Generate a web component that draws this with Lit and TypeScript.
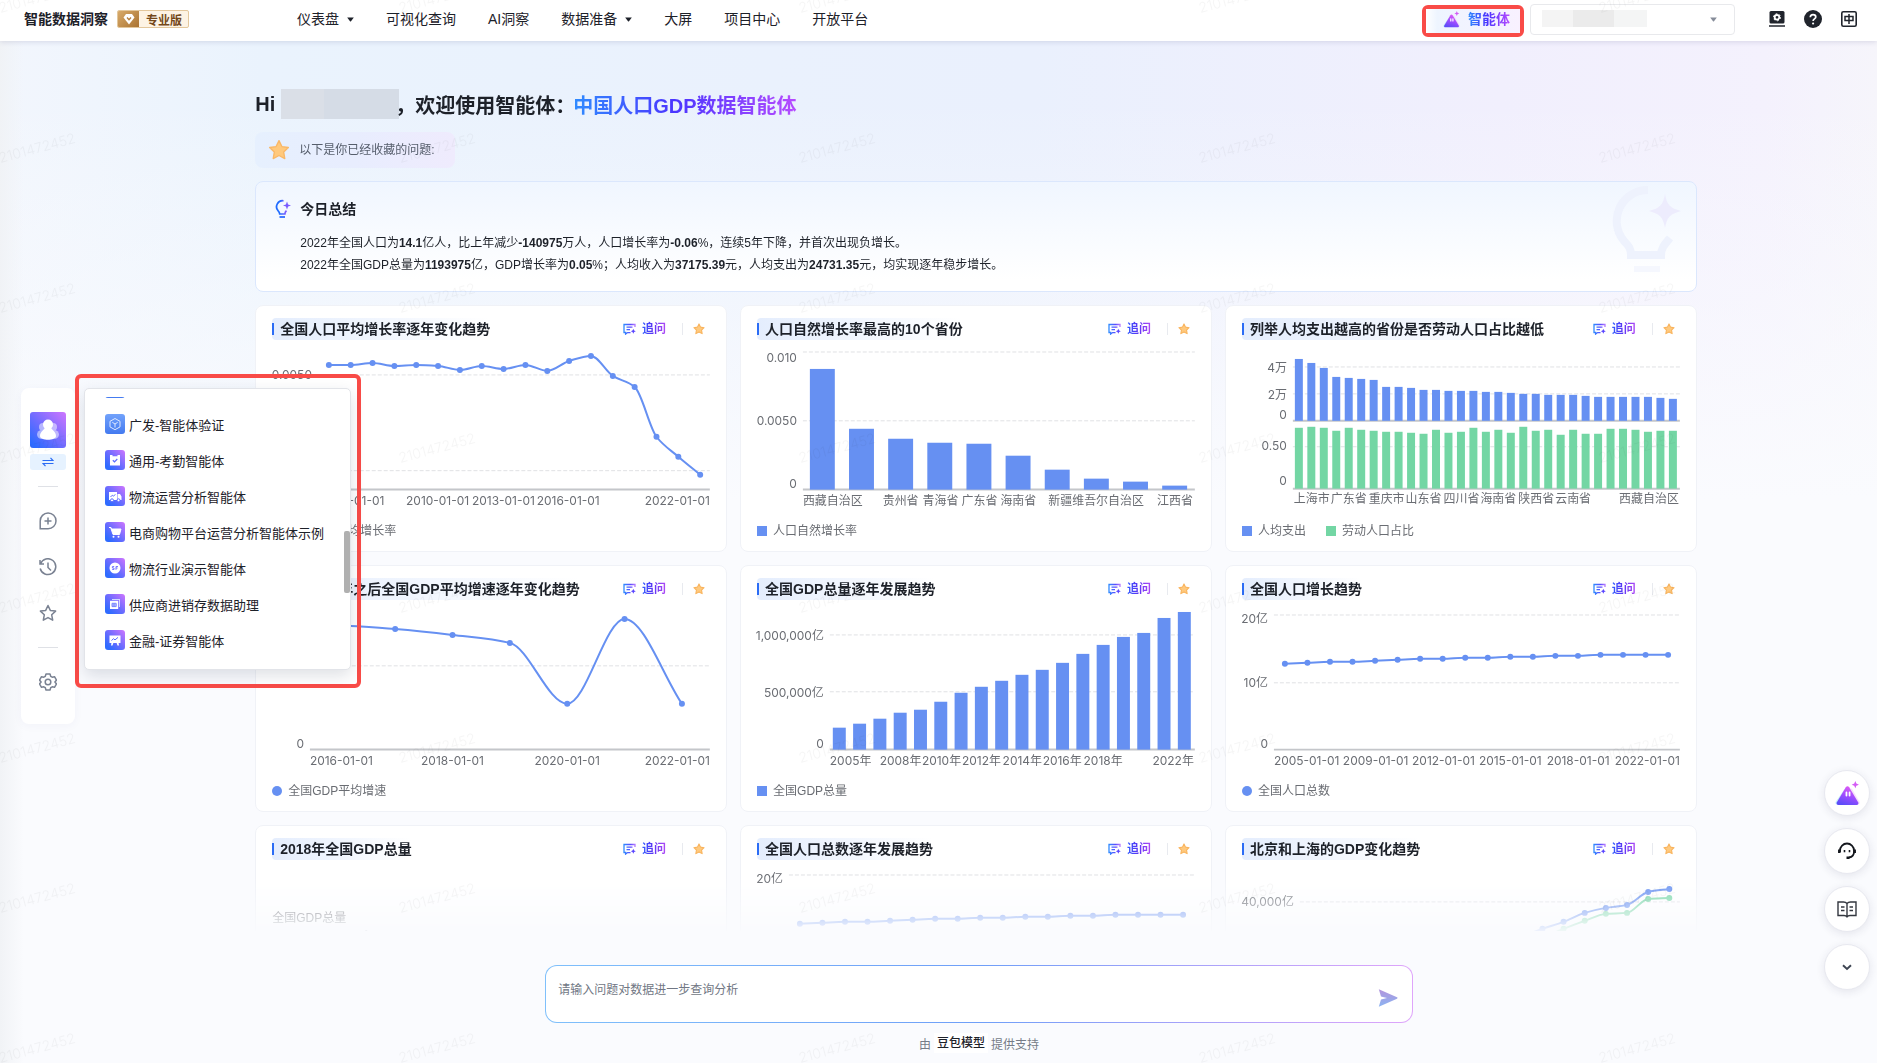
import { LitElement, html, svg, css, nothing, TemplateResult } from "lit";
import { customElement, property } from "lit/decorators.js";

type Anchor = "start" | "middle" | "end";
interface Label { t: string; x: number; y: number; a?: Anchor }
interface Rule { y: number; from: number; axis?: boolean }
interface Bars { x: number; step: number; w: number; base: number; tops: number[]; color: string }
interface Line { x: number; step: number; ys: number[]; color: string }
interface ChartSpec {
  title: string;
  rules?: Rule[];
  bars?: Bars[];
  lines?: Line[];
  labels?: Label[];
  legend?: { t: string; color: string; round?: boolean }[];
  metric?: { name: string; value: string };
}

const BLUE = "#6690f2";
const GREEN = "#73d6a4";

const ends = (right: number, items: [string, number][]): Label[] =>
  items.map(([t, y]) => ({ t, x: right, y, a: "end" as Anchor }));

const along = (y: number, first: [string, number], mid: [string, number][], last: [string, number]): Label[] => [
  { t: first[0], x: first[1], y, a: "start" },
  ...mid.map(([t, x]) => ({ t, x, y, a: "middle" as Anchor })),
  { t: last[0], x: last[1], y, a: "end" },
];

const populationYs = [59, 58, 57, 57, 56, 55, 54, 54, 53, 53, 52, 52, 51, 51, 50, 50, 50, 50];
const population = (title: string): ChartSpec => ({
  title,
  rules: [{ y: 10, from: 32 }, { y: 78, from: 32 }, { y: 145, from: 32, axis: true }],
  lines: [{ x: 43, step: 22.6, ys: populationYs, color: BLUE }],
  labels: [
    ...ends(26, [["20亿", 14], ["10亿", 78], ["0", 139]]),
    ...along(156, ["2005-01-01", 32],
      [["2009-01-01", 134], ["2012-01-01", 202], ["2015-01-01", 269], ["2018-01-01", 337]],
      ["2022-01-01", 439]),
  ],
  legend: [{ t: "全国人口总数", color: BLUE, round: true }],
});

const CHARTS: ChartSpec[] = [
  {
    title: "全国人口平均增长率逐年变化趋势",
    rules: [{ y: 30, from: 46 }, { y: 126, from: 46 }, { y: 145, from: 46, axis: true }],
    lines: [{ x: 57, step: 21.9, color: BLUE, ys: [20, 20, 18, 21, 20, 21, 25, 21, 24, 20, 26, 16, 11, 31, 42, 92, 112, 130] }],
    labels: [
      ...ends(40, [["0.0050", 30], ["0", 126]]),
      ...along(156, ["2005-01-01", 47], [["2010-01-01", 166], ["2013-01-01", 232], ["2016-01-01", 297]], ["2022-01-01", 439]),
    ],
    legend: [{ t: "全国人口平均增长率", color: BLUE, round: true }],
  },
  {
    title: "人口自然增长率最高的10个省份",
    rules: [{ y: 7, from: 46 }, { y: 76, from: 46 }, { y: 145, from: 46, axis: true }],
    bars: [{ x: 53, step: 39.25, w: 25, base: 145, color: BLUE, tops: [24, 84, 94, 98, 99, 111, 125, 134, 137, 141] }],
    labels: [
      ...ends(40, [["0.010", 13], ["0.0050", 76], ["0", 139]]),
      ...along(156, ["西藏自治区", 46],
        [["贵州省", 144], ["青海省", 184], ["广东省", 223], ["海南省", 262], ["新疆维吾尔自治区", 340]],
        ["江西省", 437]),
    ],
    legend: [{ t: "人口自然增长率", color: BLUE }],
  },
  {
    title: "列举人均支出越高的省份是否劳动人口占比越低",
    rules: [
      { y: 22, from: 51 }, { y: 49, from: 51 }, { y: 76, from: 51, axis: true },
      { y: 102, from: 51 }, { y: 144, from: 51, axis: true },
    ],
    bars: [
      {
        x: 53, step: 12.5, w: 8, base: 76, color: BLUE,
        tops: [14, 18, 23, 32, 33, 34, 35, 42, 42, 43, 45, 45, 46, 46, 46, 47, 47, 48, 49, 49, 50, 50, 50, 51, 52, 52, 52, 52, 52, 53, 54],
      },
      {
        x: 53, step: 12.5, w: 8, base: 144, color: GREEN,
        tops: [83, 82, 83, 86, 83, 85, 86, 87, 87, 88, 89, 85, 88, 87, 83, 87, 85, 88, 82, 86, 85, 90, 85, 89, 89, 84, 84, 85, 87, 86, 86],
      },
    ],
    labels: [
      ...ends(45, [["4万", 23], ["2万", 50], ["0", 70], ["0.50", 101], ["0", 136]]),
      ...along(154, ["上海市", 52],
        [["广东省", 107], ["重庆市", 145], ["山东省", 182], ["四川省", 220], ["海南省", 257], ["陕西省", 295], ["云南省", 332]],
        ["西藏自治区", 438]),
    ],
    legend: [{ t: "人均支出", color: BLUE }, { t: "劳动人口占比", color: GREEN }],
  },
  {
    title: "统计2015年之后全国GDP平均增速逐年变化趋势",
    rules: [{ y: 61, from: 38 }, { y: 145, from: 38, axis: true }],
    lines: [{ x: 66, step: 57.5, color: BLUE, ys: [20, 24, 30, 38, 99, 14, 99] }],
    labels: [
      ...ends(32, [["0.050", 58], ["0", 139]]),
      ...along(156, ["2016-01-01", 38], [["2018-01-01", 181], ["2020-01-01", 296]], ["2022-01-01", 439]),
    ],
    legend: [{ t: "全国GDP平均增速", color: BLUE, round: true }],
  },
  {
    title: "全国GDP总量逐年发展趋势",
    rules: [{ y: 30, from: 73 }, { y: 87, from: 73 }, { y: 145, from: 73, axis: true }],
    bars: [{
      x: 76, step: 20.35, w: 13, base: 145, color: BLUE,
      tops: [123, 119, 114, 108, 105, 97, 88, 82, 76, 70, 65, 58, 49, 40, 32, 28, 13, 7],
    }],
    labels: [
      ...ends(67, [["1,000,000亿", 31], ["500,000亿", 88], ["0", 139]]),
      ...along(156, ["2005年", 73],
        [["2008年", 144], ["2010年", 185], ["2012年", 225], ["2014年", 266], ["2016年", 306], ["2018年", 347]],
        ["2022年", 438]),
    ],
    legend: [{ t: "全国GDP总量", color: BLUE }],
  },
  population("全国人口增长趋势"),
  { title: "2018年全国GDP总量", metric: { name: "全国GDP总量", value: "914,117.58亿" } },
  population("全国人口总数逐年发展趋势"),
  {
    title: "北京和上海的GDP变化趋势",
    rules: [{ y: 37, from: 58 }, { y: 145, from: 58, axis: true }],
    lines: [
      { x: 280, step: 21.2, color: BLUE, ys: [72, 64, 57, 48, 43, 40, 27, 24] },
      { x: 280, step: 21.2, color: GREEN, ys: [81, 73, 64, 56, 49, 48, 34, 33] },
    ],
    labels: [...ends(52, [["40,000亿", 37]])],
    legend: [],
  },
];

/** Path through the points as a monotone cubic, so that peaks stay on the data. */
function smoothPath(xs: number[], ys: number[]): string {
  const n = xs.length;
  const slope = (i: number) => (ys[i + 1] - ys[i]) / (xs[i + 1] - xs[i]);
  const tangent = xs.map((_, i) => {
    if (i === 0) return slope(0);
    if (i === n - 1) return slope(n - 2);
    const a = slope(i - 1);
    const b = slope(i);
    return a * b <= 0 ? 0 : (2 * a * b) / (a + b);
  });
  let d = `M${xs[0]} ${ys[0]}`;
  for (let i = 0; i < n - 1; i++) {
    const h = (xs[i + 1] - xs[i]) / 3;
    d += `C${xs[i] + h} ${ys[i] + tangent[i] * h} ${xs[i + 1] - h} ${ys[i + 1] - tangent[i + 1] * h} ${xs[i + 1]} ${ys[i + 1]}`;
  }
  return d;
}

const STAR = "M8 1.2l2.1 4.3 4.7.7-3.4 3.3.8 4.7L8 12l-4.2 2.2.8-4.7L1.2 6.2l4.7-.7z";

@customElement("chart-card")
export class ChartCard extends LitElement {
  @property({ attribute: false }) spec!: ChartSpec;

  static styles = css`
    :host { display: block; }
    * { box-sizing: border-box; }
    .card {
      height: 247px;
      padding: 12px 15px 0 16px;
      background: #fff;
      border: 1px solid #f0f2f7;
      border-radius: 8px;
    }
    .head { display: flex; align-items: center; height: 22px; padding-right: 6px; }
    .title {
      display: flex;
      align-items: center;
      gap: 6px;
      height: 22px;
      margin: 0;
      border-radius: 4px;
      background: linear-gradient(90deg, #e4edfd, #fff);
      color: #1d2129;
      font-size: 14px;
      font-weight: 600;
      line-height: 22px;
      white-space: nowrap;
    }
    .title::before { content: ""; width: 2px; height: 12px; background: #2b6cf5; }
    .tools { display: flex; align-items: center; margin-left: auto; }
    button { display: flex; align-items: center; padding: 0; border: 0; background: none; font: inherit; cursor: pointer; }
    .follow { gap: 6px; }
    .follow span {
      font-size: 12px;
      font-weight: 600;
      line-height: 20px;
      color: transparent;
      background: linear-gradient(90deg, #2f5bff, #5a35f5 45%, #b44bf5);
      background-clip: text;
      -webkit-background-clip: text;
    }
    .split { width: 1px; height: 12px; margin: 0 10px 0 16px; background: #e8eaef; }
    .plot { display: block; width: 100%; height: auto; margin-top: 5px; overflow: visible; }
    .plot text { font-family: Inter, "Noto Sans CJK SC", sans-serif; font-size: 12px; fill: #6a6d73; }
    .legend { display: flex; gap: 20px; height: 20px; margin-top: 6px; }
    .key { display: flex; align-items: center; gap: 6px; color: #6a6d73; font-size: 12px; line-height: 20px; }
    .mark { display: block; width: 10px; height: 10px; }
    .metric { margin: 48px 0 0; color: #6a6d73; font-size: 12px; line-height: 20px; }
    .value { margin: 0; color: #1d2129; font-size: 18px; font-weight: 700; line-height: 24px; }
  `;

  private plot(s: ChartSpec): TemplateResult {
    return html`<svg class="plot" viewBox="0 0 440 170" role="img" aria-label=${s.title}>
      ${(s.rules ?? []).map((r) => svg`<line x1=${r.from} x2="439" y1=${r.y} y2=${r.y}
        stroke=${r.axis ? "#c4c6ca" : "#e0e1e4"} stroke-width=${r.axis ? 2 : 1}
        stroke-dasharray=${r.axis ? "none" : "4 2"} />`)}
      ${(s.bars ?? []).map((b) => b.tops.map((top, i) => svg`<rect x=${b.x + i * b.step} y=${top}
        width=${b.w} height=${b.base - top} fill=${b.color} />`))}
      ${(s.lines ?? []).map((l) => {
        const xs = l.ys.map((_, i) => l.x + i * l.step);
        return svg`<path d=${smoothPath(xs, l.ys)} fill="none" stroke=${l.color} stroke-width="2" />
          ${xs.map((x, i) => svg`<circle cx=${x} cy=${l.ys[i]} r="3" fill=${l.color} />`)}`;
      })}
      ${(s.labels ?? []).map((l) => svg`<text x=${l.x} y=${l.y + 4} text-anchor=${l.a ?? "start"}>${l.t}</text>`)}
    </svg>`;
  }

  render() {
    const s = this.spec;
    return html`<article class="card">
      <header class="head">
        <h3 class="title">${s.title}</h3>
        <div class="tools">
          <button class="follow">
            <svg width="13" height="12" viewBox="0 0 13 12" fill="none">
              <defs><linearGradient id="g" x1="0" x2="1"><stop stop-color="#2f8bff" /><stop offset=".6" stop-color="#5b4bff" /><stop offset="1" stop-color="#b77bff" /></linearGradient></defs>
              <path d="M12 4V1.500H1v8h1.600v1.600L4.600 9.600H7.500M3.500 4.200h6M3.500 6.700h3.500" stroke="url(#g)" stroke-width="1.300" />
              <path d="M10.300 5.800l.8 1.700 1.700.8-1.700.8-.8 1.700-.8-1.700-1.700-.8 1.700-.8z" fill="#5a45ff" />
            </svg>
            <span>追问</span>
          </button>
          <i class="split"></i>
          <button aria-label="取消收藏">
            <svg width="12" height="12" viewBox="0 0 16 16"><path d=${STAR} fill="#ffc97d" stroke="#f9b35c" stroke-width="1.400" stroke-linejoin="round" /></svg>
          </button>
        </div>
      </header>
      ${s.metric
        ? html`<p class="metric">${s.metric.name}</p><p class="value">${s.metric.value}</p>`
        : this.plot(s)}
      ${s.legend?.length
        ? html`<div class="legend">${s.legend.map((k) => html`<span class="key">
            <svg class="mark" viewBox="0 0 10 10"><rect width="10" height="10" rx=${k.round ? 5 : 0} fill=${k.color} /></svg>${k.t}</span>`)}</div>`
        : nothing}
    </article>`;
  }
}

const NAV: { t: string; menu?: boolean }[] = [
  { t: "仪表盘", menu: true }, { t: "可视化查询" }, { t: "AI洞察" }, { t: "数据准备", menu: true },
  { t: "大屏" }, { t: "项目中心" }, { t: "开放平台" },
];

const AGENTS: { t: string; plain?: boolean; glyph: TemplateResult }[] = [
  { t: "销售分析智能体", plain: true, glyph: svg`` },
  {
    t: "广发-智能体验证", plain: true,
    glyph: svg`<path d="M10 4.500l5 2.800v5.600l-5 2.800-5-2.800V7.300z M7.300 8.300L10 10l2.700-1.700M10 10v3.500" fill="none" stroke="#dfe9ff" stroke-width="1" />`,
  },
  {
    t: "通用-考勤智能体",
    glyph: svg`<path d="M5 5h2.500v1.200h5V5H15v10.500H5z" fill="#fff" /><path d="M7.800 10.200l1.700 1.600 2.800-2.800" fill="none" stroke="#5a6cff" stroke-width="1.200" />`,
  },
  {
    t: "物流运营分析智能体",
    glyph: svg`<path d="M4 6h8v8H4z M12.500 8h2.500l1.500 2.500V14h-4z" fill="#fff" /><circle cx="7" cy="14.300" r="1.500" fill="#fff" stroke="#5a6cff" /><circle cx="13.500" cy="14.300" r="1.500" fill="#fff" stroke="#5a6cff" /><path d="M5.500 11l1.800-1.800 1.200 1 1.800-1.900" fill="none" stroke="#5a6cff" />`,
  },
  {
    t: "电商购物平台运营分析智能体示例",
    glyph: svg`<path d="M4 5.500h2l.5 1.500H16l-1.500 5.500H8L6 6.500" fill="#fff" stroke="#fff" /><circle cx="8.500" cy="14.800" r="1" fill="#fff" /><circle cx="13.500" cy="14.800" r="1" fill="#fff" />`,
  },
  {
    t: "物流行业演示智能体",
    glyph: svg`<circle cx="10" cy="10" r="5.500" fill="#fff" /><path d="M9.200 8.500H7.400v1.500h1.600v1.500H7.200M11 11.800V8.500h2M11 10h1.600" fill="none" stroke="#6a6cff" stroke-width=".9" />`,
  },
  {
    t: "供应商进销存数据助理",
    glyph: svg`<path d="M7 5h8v8h-1V6H7z" fill="#cfd9ff" /><path d="M5 6.800h8.200V15H5z" fill="#fff" /><path d="M7 9.300h4.200v3.300H7zM7 11h4.200M9 9.300v3.300" fill="none" stroke="#5a6cff" stroke-width=".8" />`,
  },
  {
    t: "金融-证券智能体",
    glyph: svg`<path d="M4.500 5.500h11v7.500h-11z M6.500 12.500h2l-1 3h-1.500z M11.500 12.500h2l.5 3h-1.500z" fill="#fff" /><path d="M6.500 10.500l2-1.800 1.500 1.200 3-2.500" fill="none" stroke="#5a6cff" />`,
  },
];

const mascot = (size: number) => html`<svg width=${size} height=${size} viewBox="0 0 24 24">
  <defs><linearGradient id="m" x1=".7" y1="0" x2=".3" y2="1"><stop stop-color="#e45cf5" /><stop offset=".55" stop-color="#9a4cff" /><stop offset="1" stop-color="#5b4cf8" /></linearGradient></defs>
  <path d="M9 8c.8-1.300 2.200-1.300 3 0l6.500 12c.7 1.300 0 2.500-1.500 2.500H2C.5 22.500 0 21.300.7 20z" fill="#b9ecf8" opacity=".8" />
  <path d="M13.500 8c.8-1.300 2.200-1.300 3 0l7 12c.5 1.300 0 2.500-1.500 2.500H9z" fill="#f0c9f8" opacity=".6" />
  <path d="M10.400 6c.8-1.300 2.400-1.300 3.200 0l8.600 14.300c.7 1.400 0 2.700-1.500 2.700H3.300c-1.500 0-2.200-1.300-1.500-2.700z" fill="url(#m)" />
  <path d="M11 11v3M14 11v3" stroke="#fff" stroke-width="1.700" stroke-linecap="round" />
  <path d="M19.500 0l1 2.500L23 3.500l-2.500 1-1 2.500-1-2.500-2.500-1 2.500-1z" fill="#d45cf5" />
</svg>`;

const caret = html`<svg width="7" height="5" viewBox="0 0 8 6"><path d="M0 .5h8L4.600 5a.8.8 0 0 1-1.200 0z" fill="currentColor" /></svg>`;

@customElement("app-root")
export class AppRoot extends LitElement {
  static styles = css`
    :host {
      position: relative;
      display: flex;
      flex-direction: column;
      height: 100vh;
      overflow: hidden;
      color: #1d2129;
      font-family: "Liberation Sans", "Noto Sans CJK SC", sans-serif;
      font-size: 12px;
      background:
        linear-gradient(90deg, rgba(240, 242, 245, .9), rgba(240, 242, 245, 0) 24px),
        linear-gradient(180deg, rgba(250, 251, 254, 0) 100px, #fafbfe 500px),
        linear-gradient(90deg, #f2f6fd, #eaf3fd 14%, #eaf0fd 55%, #f1effd 80%, #f4f1fd 94%, #f6f5fb);
    }
    * { box-sizing: border-box; }
    button { padding: 0; border: 0; background: none; color: inherit; font: inherit; cursor: pointer; }
    .bar {
      display: flex;
      align-items: center;
      flex: none;
      height: 41px;
      padding: 0 19px 3px 24px;
      background: #fff;
      box-shadow: 0 1px 5px rgba(60, 60, 110, .16);
    }
    .brand { font-size: 14px; font-weight: 700; line-height: 20px; }
    .tier {
      display: flex;
      align-items: center;
      height: 18px;
      margin-left: 9px;
      overflow: hidden;
      border: 1px solid #e3c79c;
      border-radius: 2px;
      background: #fdf3e4;
      color: #74481a;
      font-size: 12px;
      font-weight: 600;
    }
    .gem { display: grid; place-items: center; width: 21px; height: 18px; margin-right: 7px; background: linear-gradient(135deg, #d9ac6c, #a9712f); }
    .tier span { padding-right: 6px; }
    .nav { display: flex; gap: 32px; margin-left: 108px; }
    .nav a { display: flex; align-items: center; gap: 8px; color: inherit; font-size: 14px; line-height: 20px; text-decoration: none; }
    .right { display: flex; align-items: center; margin-left: auto; }
    .ring { border: 4px solid #f94b47; border-radius: 6px; }
    .ring.agent { height: 32px; margin: 4px 6px 0 0; }
    .agent button {
      display: flex;
      align-items: center;
      gap: 8px;
      height: 24px;
      padding: 0 10px 4px 17px;
      background: linear-gradient(90deg, #fff, #eef5ff 12%, #f8f1ff);
    }
    .agent span, .hello em {
      color: transparent;
      background: linear-gradient(90deg, #2f8cff, #4a35ff 45%, #b74bff);
      background-clip: text;
      -webkit-background-clip: text;
    }
    .agent span { font-size: 14px; font-weight: 600; line-height: 20px; }
    .project { position: relative; display: flex; align-items: center; margin-right: 33px; color: #868c99; }
    .project select { width: 205px; height: 31px; border: 1px solid #e8e9ec; border-radius: 4px; background: #fff; appearance: none; }
    .project .masked { position: absolute; left: 12px; top: 6px; display: flex; height: 17px; }
    .masked i { width: 31px; background: #f4f4f4; }
    .masked i:nth-child(2) { width: 41px; background: #ebebeb; }
    .masked i:nth-child(3) { width: 33px; background: #f4f5f5; }
    .project svg { position: absolute; right: 18px; }
    .utils { display: flex; align-items: center; gap: 18px; }
    .utils button { display: grid; place-items: center; width: 18px; height: 18px; }

    .body { display: flex; flex: 1; min-height: 0; }
    .side { display: flex; align-items: center; flex: none; width: 75px; padding: 8px 0 0 21px; }
    .dock { position: relative; width: 54px; }
    .rail {
      display: flex;
      flex-direction: column;
      align-items: center;
      height: 336px;
      padding-top: 24px;
      border-radius: 8px;
      background: #fff;
      box-shadow: 0 2px 10px rgba(40, 60, 120, .04);
      color: #7a8292;
    }
    .avatar { display: grid; width: 36px; height: 36px; }
    .swap { display: grid; place-items: center; width: 36px; height: 16px; margin-top: 6px; border-radius: 3px; background: #e6f2ff; }
    .rail hr { width: 20px; height: 1px; margin: 16px 0 0; border: 0; background: #dfe1e6; }
    .tools { display: flex; flex-direction: column; gap: 28px; margin-top: 25px; }
    .tools button { display: grid; width: 18px; height: 18px; }
    .tools + hr { margin-top: 25px; }
    .callout { position: absolute; z-index: 3; left: 100%; top: -14px; width: 286px; height: 314px; padding: 10px 5px; }
    .menu {
      position: relative;
      width: 267px;
      height: 282px;
      padding: 8px 0 0 20px;
      border: 1px solid #e2e4e9;
      border-radius: 5px;
      background: #fff;
      box-shadow: 0 6px 16px rgba(30, 40, 70, .14);
    }
    .menu ul { height: 264px; margin: 0; padding: 0; overflow: hidden; list-style: none; }
    .menu li:first-child { margin-top: -27px; }
    .menu button { display: flex; align-items: center; gap: 4px; height: 36px; font-size: 13px; white-space: nowrap; }
    .thumb { position: absolute; right: 0; top: 142px; width: 6px; height: 62px; border-radius: 2px; background: #b0b0b0; }

    .main { display: flex; flex-direction: column; flex: 1; min-width: 0; }
    .scroll {
      flex: 1;
      min-height: 0;
      overflow: hidden;
      -webkit-mask-image: linear-gradient(#000 calc(100% - 54px), rgba(0, 0, 0, .08));
      mask-image: linear-gradient(#000 calc(100% - 54px), rgba(0, 0, 0, .08));
    }
    .page { width: 80%; margin: 0 auto; padding-top: 47px; }
    .hello { display: flex; align-items: center; height: 32px; margin: 0; font-size: 20px; font-weight: 700; white-space: nowrap; }
    .hello .masked { display: flex; width: 118px; height: 30px; margin: 0 -4px 0 6px; background: #d5dce6; }
    .hello .masked i { width: 43px; height: 30px; background: #dadfe7; }
    .hello em { margin-left: -2px; font-style: normal; }
    .saved {
      display: inline-flex;
      align-items: center;
      gap: 9px;
      height: 36px;
      margin: 12px 0 0;
      padding: 0 20px 0 13px;
      border-radius: 8px;
      background: linear-gradient(90deg, #e6f0fe, #e8edfe 50%, #efebfd);
      color: #565e6c;
      line-height: 20px;
    }
    .summary {
      position: relative;
      height: 111px;
      margin: 13px 0;
      padding: 16px 18px;
      border: 1px solid #dbe7fd;
      border-radius: 8px;
      background: linear-gradient(180deg, #f0f6ff, #fff 90%);
    }
    .summary h2 { display: flex; align-items: center; gap: 8px; margin: 0 0 12px; font-size: 14px; line-height: 22px; }
    .summary p { margin: 0; padding-left: 26px; line-height: 22px; }
    .ghost { position: absolute; right: 8px; top: 0; }
    .grid { display: grid; grid-template-columns: repeat(3, minmax(0, 1fr)); gap: 13px; }

    .foot { display: flex; flex-direction: column; align-items: center; flex: none; padding: 34px 0 10px 6px; }
    .ask {
      display: flex;
      align-items: center;
      width: 48.300%;
      height: 58px;
      padding: 0 14px 0 12px;
      border: 1px solid transparent;
      border-radius: 12px;
      background: linear-gradient(#fff, #fff) padding-box, linear-gradient(90deg, #7fc0fb, #6f9ff8 50%, #dfa5fb) border-box;
    }
    .ask textarea { flex: 1; height: 36px; padding: 4px 0 0; border: 0; outline: 0; resize: none; background: none; font: inherit; line-height: 20px; }
    .ask textarea::placeholder { color: #717784; opacity: 1; }
    .ask button { display: grid; margin-top: 8px; }
    .credit { display: flex; align-items: center; height: 20px; margin: 10px 0 0; color: #757b87; }
    .credit b { padding: 0 3px; margin: 0 3px; background: #fff; color: #1d2129; font-weight: 500; line-height: 20px; }

    .marks { position: absolute; inset: 0; z-index: 2; width: 100%; height: 100%; pointer-events: none; }
    .marks text { font-family: Inter, sans-serif; font-size: 14px; font-weight: 300; fill: #000; fill-opacity: .04; }
    .float { position: absolute; z-index: 3; right: 7px; bottom: 73px; display: flex; flex-direction: column; gap: 12px; }
    .float button {
      display: grid;
      place-items: center;
      width: 46px;
      height: 46px;
      border: 1px solid #e8e9f0;
      border-radius: 50%;
      background: #fff;
      box-shadow: 0 2px 8px rgba(40, 40, 80, .1);
    }
  `;

  private header() {
    return html`<header class="bar">
      <span class="brand">智能数据洞察</span>
      <div class="tier">
        <i class="gem"><svg width="12" height="12" viewBox="0 0 12 12"><path d="M3 1h6l2.500 3.500L6 11.500.5 4.500z" fill="#fff" /><path d="M4 4.500l2 2.200 2-2.200" fill="none" stroke="#b57f3e" stroke-width="1.300" /></svg></i>
        <span>专业版</span>
      </div>
      <nav class="nav">${NAV.map((n) => html`<a href="#">${n.t}${n.menu ? caret : nothing}</a>`)}</nav>
      <div class="right">
        <div class="ring agent"><button>${mascot(17)}<span>智能体</span></button></div>
        <div class="project">
          <select aria-label="项目"><option></option></select>
          <div class="masked"><i></i><i></i><i></i></div>
          ${caret}
        </div>
        <div class="utils">
          <button aria-label="管理后台"><svg width="16" height="16" viewBox="0 0 16 16"><rect x=".5" width="15" height="12.500" rx="1.500" fill="#20242c" /><path d="M0 15h16" stroke="#20242c" stroke-width="1.500" /><circle cx="8" cy="6.300" r="2.300" fill="none" stroke="#fff" stroke-width="1.800" /><circle cx="8" cy="6.300" r="3.500" fill="none" stroke="#fff" stroke-width="1" stroke-dasharray="1.800 1.860" /></svg></button>
          <button aria-label="帮助"><svg width="18" height="18" viewBox="0 0 18 18"><circle cx="9" cy="9" r="9" fill="#20242c" /><path d="M6.300 7.200c0-3.600 5.500-3.400 5.500-.2 0 1.900-2.700 2-2.700 4" fill="none" stroke="#fff" stroke-width="1.700" /><circle cx="9.100" cy="13.500" r="1.100" fill="#fff" /></svg></button>
          <button aria-label="语言"><svg width="16" height="16" viewBox="0 0 16 16" fill="none" stroke="#20242c"><rect x=".8" y=".8" width="14.400" height="14.400" rx="1.500" stroke-width="1.600" /><path d="M4 5.500h8v4H4zM8 3v10" stroke-width="1.500" /></svg></button>
        </div>
      </div>
    </header>`;
  }

  private sidebar() {
    const line = (label: string, g: TemplateResult) => html`<button aria-label=${label}>
      <svg width="18" height="18" viewBox="0 0 18 18" fill="none" stroke="#7a8292" stroke-width="1.500">${g}</svg></button>`;
    return html`<aside class="side"><div class="dock">
      <div class="rail">
        <button class="avatar" aria-label="当前智能体">
          <svg width="36" height="36" viewBox="0 0 36 36">
            <defs><linearGradient id="a" x1="0" y1="1" x2="1" y2="0"><stop offset=".1" stop-color="#2f6bff" /><stop offset=".45" stop-color="#6a6cff" /><stop offset="1" stop-color="#cf75ff" /></linearGradient></defs>
            <rect width="36" height="36" rx="3" fill="url(#a)" />
            <g fill="#fff" opacity=".5"><circle cx="13" cy="15" r="4" /><circle cx="23" cy="15" r="4" /><ellipse cx="12" cy="22.500" rx="5" ry="4.500" /><ellipse cx="24" cy="22.500" rx="5" ry="4.500" /></g>
            <circle cx="18" cy="12.500" r="5" fill="#fff" /><path d="M15 15h6c0 3 5 4 5 9 0 5-16 5-16 0 0-5 5-6 5-9z" fill="#fff" />
          </svg>
        </button>
        <button class="swap" aria-label="切换智能体"><svg width="12" height="10" viewBox="0 0 12 10" fill="none" stroke="#2b6cf5" stroke-width="1.200"><path d="M.5 3.500h10.500L8.500.8M11.500 6.500H1l2.500 2.700" /></svg></button>
        <hr />
        <div class="tools">
          ${line("新建对话", svg`<path d="M1.200 16.800V9A7.900 7.900 0 1 1 9 16.800zM9 5.500v7M5.500 9h7" />`)}
          ${line("历史记录", svg`<path d="M1 2v4h4M1.500 5.800A7.900 7.900 0 1 1 1.200 10.500M9 4.500V9.500l3 3" />`)}
          ${line("收藏", svg`<path d="M9 1.500l2.300 4.900 5.300.7-3.900 3.700 1 5.400L9 13.600l-4.700 2.600 1-5.400L1.400 7.100l5.300-.7z" stroke-linejoin="round" />`)}
        </div>
        <hr />
        <div class="tools">
          ${line("设置", svg`<circle cx="9" cy="9" r="2.800" /><path d="M7 1h4l.7 2.300 1.500.9 2.300-.5 2 3.400-1.600 1.900 1.600 1.900-2 3.400-2.300-.5-1.500.9L11 17H7l-.7-2.300-1.500-.9-2.300.5-2-3.400L2.100 9 .5 7.100l2-3.400 2.300.5 1.500-.9z" stroke-linejoin="round" />`)}
        </div>
      </div>
      <div class="callout ring">
        <div class="menu">
          <ul>${AGENTS.map((a) => html`<li><button>
            <svg width="20" height="20" viewBox="0 0 20 20">
              <defs>
                <linearGradient id="t" x1="0" y1="1" x2="1" y2="0"><stop offset=".15" stop-color="#2f6bff" /><stop offset=".5" stop-color="#6a6cff" /><stop offset="1" stop-color="#cf75ff" /></linearGradient>
                <linearGradient id="p" x1="0" y1="0" x2="0" y2="1"><stop stop-color="#72a2fb" /><stop offset="1" stop-color="#437af0" /></linearGradient>
              </defs>
              <rect width="20" height="20" rx="3" fill=${a.plain ? "url(#p)" : "url(#t)"} />${a.glyph}
            </svg>${a.t}</button></li>`)}</ul>
          <i class="thumb"></i>
        </div>
      </div>
    </div></aside>`;
  }

  render() {
    return html`
      ${this.header()}
      <div class="body">
        ${this.sidebar()}
        <main class="main">
          <div class="scroll"><div class="page">
            <h1 class="hello">Hi<span class="masked"><i></i></span>，欢迎使用智能体：<em>中国人口GDP数据智能体</em></h1>
            <p class="saved">
              <svg width="22" height="22" viewBox="0 0 16 16"><path d=${STAR} fill="#ffc97d" stroke="#f9b868" stroke-width="1" stroke-linejoin="round" /></svg>
              以下是你已经收藏的问题:
            </p>
            <section class="summary">
              <svg class="ghost" width="84" height="94" viewBox="0 0 84 94" fill="none" stroke="#eef2fd" stroke-width="8">
                <path d="M44 8A31 31 0 0 0 20 59c5 5 7 8 7 14h30c0-7 4-11 9-17" />
                <path d="M30 87h26" stroke-width="6" stroke="#f5f7fe" />
                <path d="M61 12c2 11 5 14 16 17-11 3-14 6-16 17-2-11-5-14-16-17 11-3 14-6 16-17z" fill="#edecfd" stroke="none" />
              </svg>
              <h2>
                <svg width="18" height="20" viewBox="0 0 18 20" fill="none">
                  <defs><linearGradient id="b" x1="0" x2="1"><stop offset=".3" stop-color="#1f6bff" /><stop offset="1" stop-color="#8a5cff" /></linearGradient></defs>
                  <path d="M9.500 1.800A6 6 0 0 0 4.200 11.800C5.500 13 5.600 13.600 5.700 15h5.200c.1-1.600.4-2.200 1.600-3.400" stroke="url(#b)" stroke-width="1.700" />
                  <path d="M5.500 18h5.500" stroke="#2f6bff" stroke-width="1.800" />
                  <path d="M13 2.500l1.100 2.900 2.900 1.100-2.900 1.100L13 10.500l-1.100-2.900L9 6.500l2.900-1.100z" fill="#7a5cff" />
                </svg>今日总结
              </h2>
              <p>2022年全国人口为<b>14.1</b>亿人，比上年减少<b>-140975</b>万人，人口增长率为<b>-0.06</b>%，连续5年下降，并首次出现负增长。</p>
              <p>2022年全国GDP总量为<b>1193975</b>亿，GDP增长率为<b>0.05</b>%；人均收入为<b>37175.39</b>元，人均支出为<b>24731.35</b>元，均实现逐年稳步增长。</p>
            </section>
            <section class="grid">${CHARTS.map((c) => html`<chart-card .spec=${c}></chart-card>`)}</section>
          </div></div>
          <footer class="foot">
            <div class="ask">
              <textarea aria-label="提问" placeholder="请输入问题对数据进一步查询分析"></textarea>
              <button aria-label="发送"><svg width="20" height="18" viewBox="0 0 20 18">
                <defs><linearGradient id="s" x1="0" y1="1" x2="0" y2="0"><stop stop-color="#8bb4f2" /><stop offset="1" stop-color="#b394dc" /></linearGradient></defs>
                <path d="M.8.2L19 8.300c.7.400.7 1 0 1.400L.8 17.800 3 10.500 9 9 3 7.500z" fill="url(#s)" /></svg></button>
            </div>
            <p class="credit">由<b>豆包模型</b>提供支持</p>
          </footer>
        </main>
      </div>
      <svg class="marks" aria-hidden="true">
        <defs><pattern id="w" width="400" height="150" patternUnits="userSpaceOnUse" patternTransform="translate(-163 73)">
          <text x="200" y="80" text-anchor="middle" transform="rotate(-15 200 75)">2101472452</text>
        </pattern></defs>
        <rect width="100%" height="100%" fill="url(#w)" />
      </svg>
      <div class="float">
        <button aria-label="智能助手">${mascot(25)}</button>
        <button aria-label="客服"><svg width="18" height="18" viewBox="0 0 18 18" fill="none" stroke="#14171d"><path d="M2 10V8.500a7 7 0 0 1 14 0V10c0 3-2 5-5 5.500" stroke-width="1.800" /><path d="M1.300 7.500v3.500M16.700 7.500v3.500M8.500 15.700h3" stroke-width="2.500" /><path d="M6.500 8v2.200M11.500 8v2.200" stroke-width="1.600" /></svg></button>
        <button aria-label="文档"><svg width="20" height="17" viewBox="0 0 20 17" fill="none" stroke="#33373f" stroke-width="1.400"><path d="M10 2.500C9 1.300 8 1 6.500 1H1v13.500h6c1.500 0 2.300.3 3 1.300.7-1 1.500-1.300 3-1.300h6V1h-5.500C12 1 11 1.300 10 2.500zM10 2.500v13M4 6h3.500M4 9.500h3.500M12.500 6H16M12.500 9.500H16" /></svg></button>
        <button aria-label="收起"><svg width="10" height="7" viewBox="0 0 10 7" fill="none" stroke="#3d4452" stroke-width="1.900"><path d="M1 1.200l4 3.800 4-3.800" /></svg></button>
      </div>
    `;
  }
}
